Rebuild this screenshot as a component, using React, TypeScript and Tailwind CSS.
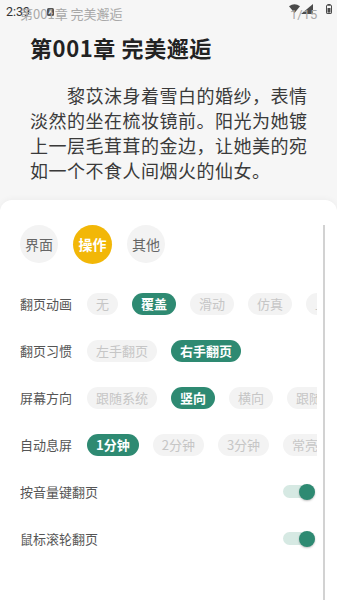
import React from "react";

const FONT = { fontFamily: '"Noto Sans CJK SC", "Noto Sans", Roboto, sans-serif' };

type Row = { label: string; options: string[]; selected: number };

const rows: Row[] = [
  { label: "翻页动画", options: ["无", "覆盖", "滑动", "仿真", "上下"], selected: 1 },
  { label: "翻页习惯", options: ["左手翻页", "右手翻页"], selected: 1 },
  { label: "屏幕方向", options: ["跟随系统", "竖向", "横向", "跟随传感器"], selected: 1 },
  { label: "自动息屏", options: ["1分钟", "2分钟", "3分钟", "常亮"], selected: 0 },
];

function Wifi() {
  return (
    <svg width="11" height="9" viewBox="0 0 11 9">
      <path d="M0 2.2 Q5.5 -1.8 11 2.2 L5.5 9 Z" fill="#4a4a4a" />
    </svg>
  );
}

function Signal() {
  return (
    <svg width="12" height="10" viewBox="0 0 12 10">
      <path d="M12 0 L12 10 L0 10 Z" fill="#4a4a4a" />
    </svg>
  );
}

function Battery() {
  return (
    <svg width="6" height="10" viewBox="0 0 6 10">
      <rect x="1.5" y="0" width="3" height="1.2" fill="#4a4a4a" />
      <rect x="0.5" y="1.2" width="5" height="8.3" rx="0.6" fill="none" stroke="#4a4a4a" strokeWidth="1" />
      <rect x="1.5" y="4" width="3" height="4.6" fill="#4a4a4a" />
    </svg>
  );
}

function Toggle() {
  return (
    <div className="relative w-[32px] h-[16px] flex items-center">
      <div className="w-[32px] h-[13px] rounded-full bg-[#d6e9e3]" />
      <div className="absolute right-0 top-0 w-[16px] h-[16px] rounded-full bg-[#2e8a72] shadow-[0_1px_2px_rgba(0,0,0,0.25)]" />
    </div>
  );
}

export default function App() {
  return (
    <div className="w-[337px] h-[600px] bg-[#f6f6f6] overflow-hidden flex flex-col" style={FONT}>
      {/* reading page */}
      <div className="h-[200px] shrink-0 flex flex-col">
        <div className="relative h-[30px] shrink-0">
          <div className="flex items-center h-[24px] pl-[6px] gap-[17px]">
            <span className="text-[12.5px] leading-none text-[#333]" style={{ fontFamily: "Roboto, sans-serif" }}>
              2:39
            </span>
            <span className="w-[7px] h-[8px] rounded-[1.5px] bg-[#555] text-white text-[6px] leading-[8px] text-center font-bold" style={{ fontFamily: "Roboto, sans-serif" }}>
              A
            </span>
          </div>
          <div className="absolute left-[289px] top-[4px] flex items-start gap-[1px]">
            <Wifi />
            <div className="mt-[-0.5px]">
              <Signal />
            </div>
            <div className="ml-[12px]">
              <Battery />
            </div>
          </div>
          <div className="absolute left-[20px] top-[5px] text-[13px] leading-[18px] text-[#a8a8a8]">第001章 完美邂逅</div>
          <div className="absolute left-[290px] top-[6px] text-[13px] leading-[18px] text-[#a8a8a8]" style={{ fontFamily: "Roboto, sans-serif" }}>
            1/15
          </div>
        </div>
        <div className="px-[30px] pt-[3px] text-[22px] leading-[28px] font-bold text-[#222] tracking-[0.6px]">第001章 完美邂逅</div>
        <div className="px-[30px] mt-[22px] text-[18px] leading-[25px] tracking-[0.5px] text-[#3a3a3a] whitespace-nowrap">
          <div className="pl-[37px]">黎苡沫身着雪白的婚纱，表情</div>
          <div>淡然的坐在梳妆镜前。阳光为她镀</div>
          <div>上一层毛茸茸的金边，让她美的宛</div>
          <div>如一个不食人间烟火的仙女。</div>
        </div>
      </div>

      {/* settings sheet */}
      <div className="relative flex-1 bg-white rounded-t-[12px] shadow-[0_-1px_6px_rgba(0,0,0,0.04)] pl-[20px] pr-[20px]">
        <div className="absolute left-[323px] top-[25px] bottom-0 w-[2px] bg-[#d2d2d2]" />
        <div className="flex gap-[15px] pt-[25px]">
          <div className="w-[38px] h-[38px] rounded-full bg-[#f3f3f3] flex items-center justify-center text-[14px] text-[#666]">界面</div>
          <div className="w-[39px] h-[39px] rounded-full bg-[#f2b707] flex items-center justify-center text-[14px] text-white font-bold">操作</div>
          <div className="w-[38px] h-[38px] rounded-full bg-[#f3f3f3] flex items-center justify-center text-[14px] text-[#666]">其他</div>
        </div>
        <div className="mt-[16px] flex flex-col w-[297px]">
          {rows.map((r) => (
            <div key={r.label} className="h-[47px] flex items-center">
              <div className="w-[67px] shrink-0 text-[13px] text-[#555]">{r.label}</div>
              <div className="w-[230px] min-w-0 shrink-0 flex gap-[14px] overflow-hidden">
                {r.options.map((o, i) =>
                  i === r.selected ? (
                    <div key={o} className="shrink-0 h-[22px] px-[9px] rounded-full bg-[#2e8a72] text-white font-bold text-[13px] leading-[22px]">
                      {o}
                    </div>
                  ) : (
                    <div key={o} className="shrink-0 h-[22px] px-[9px] rounded-full bg-[#f3f3f3] text-[#c6c6c6] text-[13px] leading-[22px]">
                      {o}
                    </div>
                  )
                )}
              </div>
            </div>
          ))}
          {["按音量键翻页", "鼠标滚轮翻页"].map((t) => (
            <div key={t} className="h-[47px] flex items-center justify-between pr-[2px]">
              <div className="text-[13px] text-[#555]">{t}</div>
              <Toggle />
            </div>
          ))}
        </div>
      </div>
    </div>
  );
}
